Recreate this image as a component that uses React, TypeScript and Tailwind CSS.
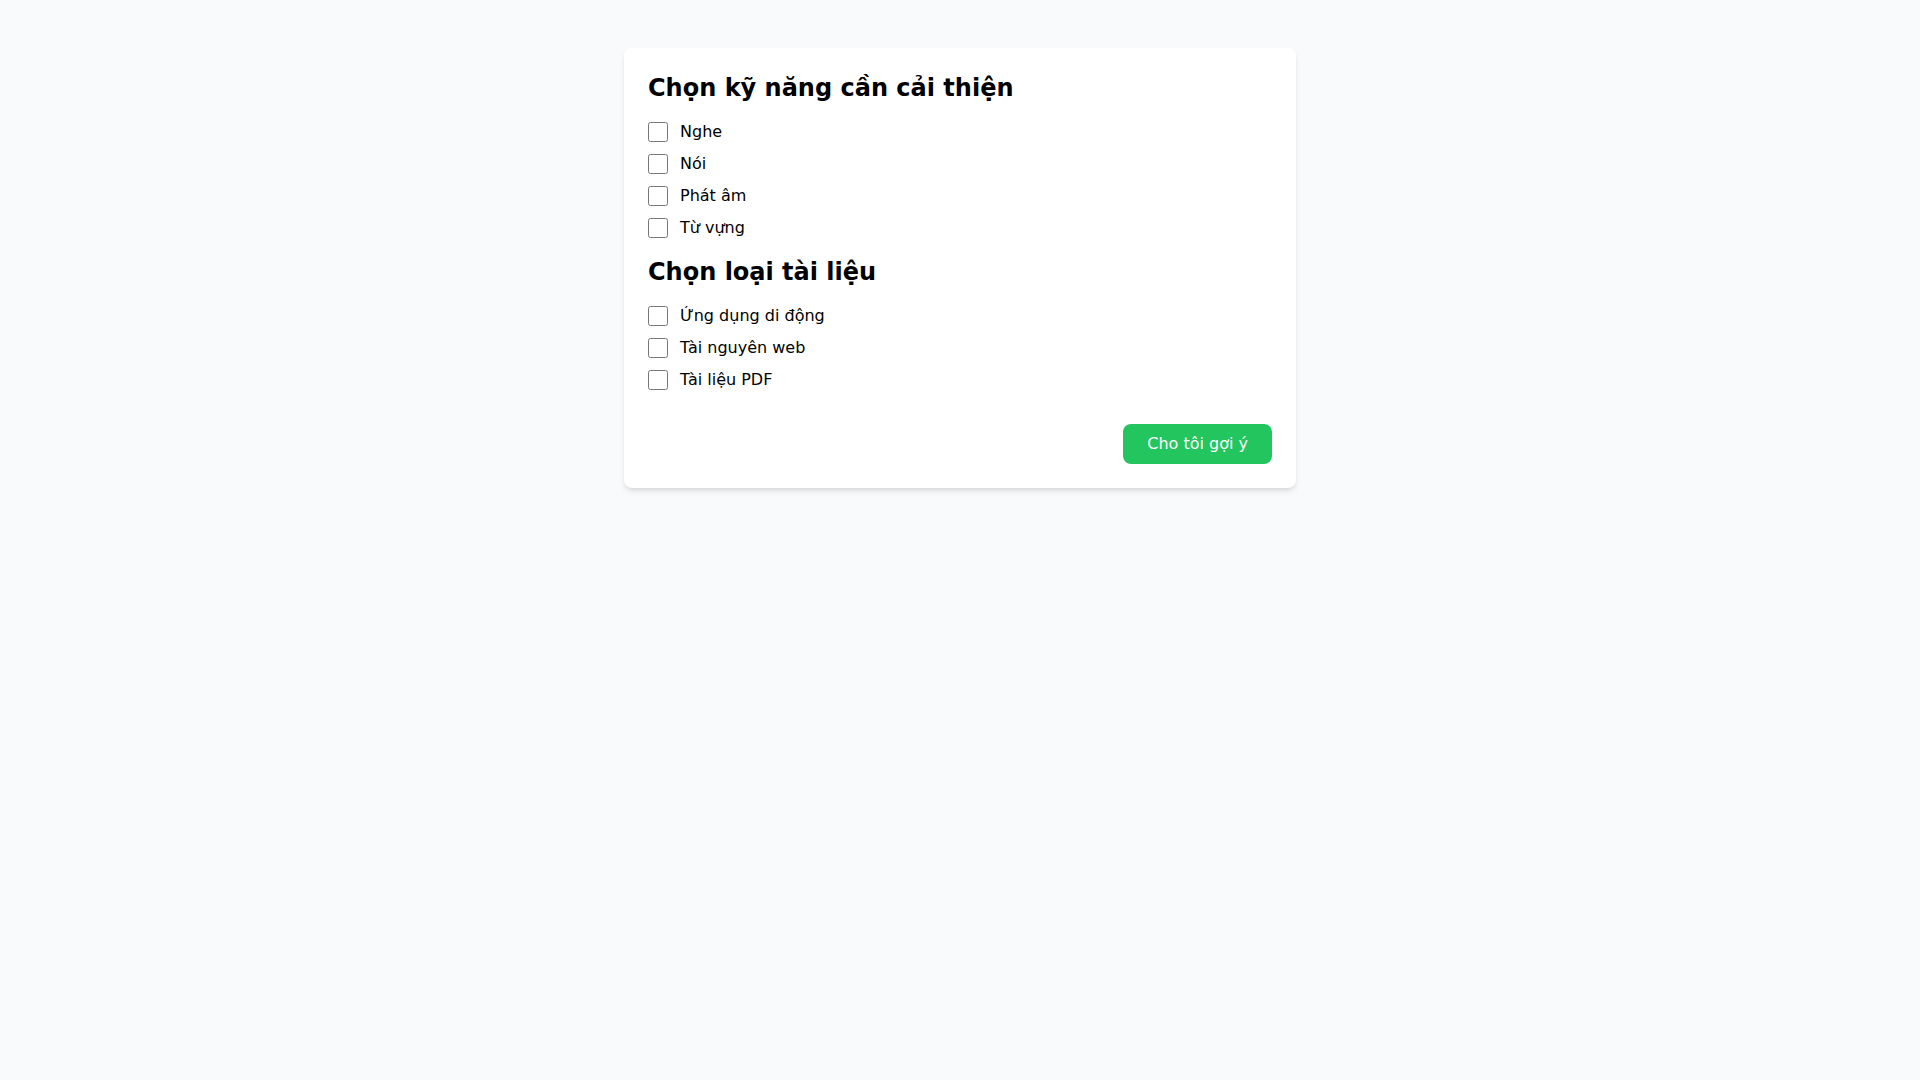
import React from 'react';

const skills = ['Nghe', 'Nói', 'Phát âm', 'Từ vựng'];
const materials = ['Ứng dụng di động', 'Tài nguyên web', 'Tài liệu PDF'];

const CheckRow = ({ label }: { label: string }) => (
  <label className="flex items-center gap-3 text-base leading-6 text-black">
    <input type="checkbox" className="w-5 h-5 m-0" />
    <span>{label}</span>
  </label>
);

const App = () => {
  return (
    <div className="min-h-screen bg-[#f9fafb] font-['DejaVu_Sans',sans-serif]">
      <div className="max-w-2xl mx-auto pt-12">
        <div className="bg-white rounded-lg shadow-md p-6">
          <h2 className="text-2xl font-bold leading-8 text-black mb-4">Chọn kỹ năng cần cải thiện</h2>
          <div className="flex flex-col gap-2">
            {skills.map((s) => (
              <CheckRow key={s} label={s} />
            ))}
          </div>

          <h2 className="text-2xl font-bold leading-8 text-black mt-4 mb-4">Chọn loại tài liệu</h2>
          <div className="flex flex-col gap-2">
            {materials.map((m) => (
              <CheckRow key={m} label={m} />
            ))}
          </div>

          <div className="flex justify-end mt-8">
            <button className="bg-[#22c55e] text-white px-6 py-2 rounded-lg text-base leading-6">
              Cho tôi gợi ý
            </button>
          </div>
        </div>
      </div>
    </div>
  );
};

export default App;
